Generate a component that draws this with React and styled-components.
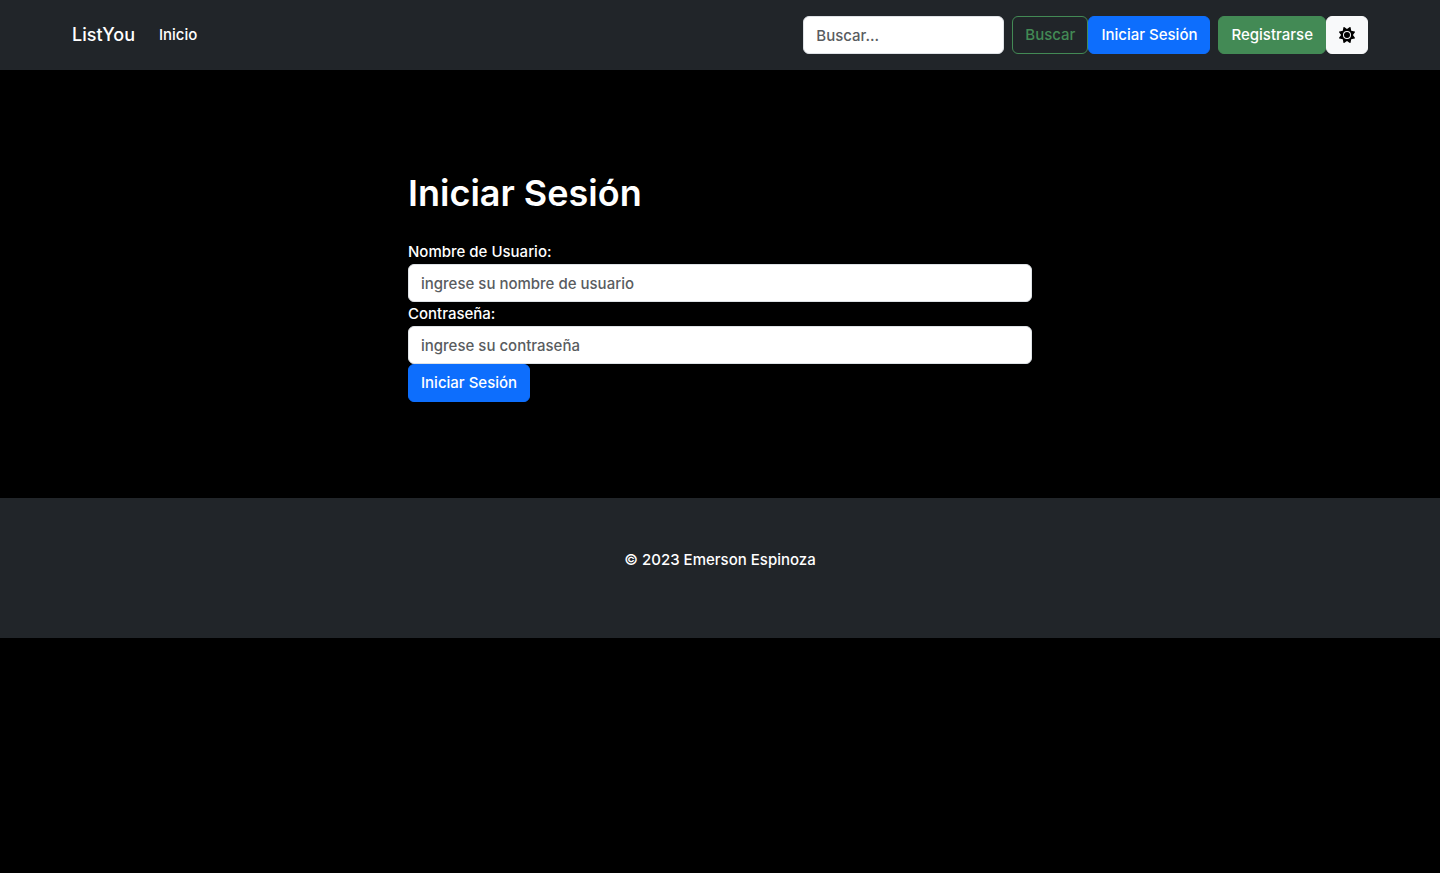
import React from "react";
import styled, { createGlobalStyle } from "styled-components";
import { FaSun } from "react-icons/fa6";

const GlobalStyle = createGlobalStyle`
  *, *::before, *::after {
    box-sizing: border-box;
  }
  body {
    margin: 0;
    background: #000;
    color: #fff;
    font-family: Inter, "Liberation Sans", sans-serif;
    font-size: 15px;
    font-weight: 500;
    line-height: 24px;
  }
`;

const Container = styled.div`
  width: 100%;
  max-width: 1320px;
  margin: 0 auto;
  padding: 0 12px;
`;

const Navbar = styled.header`
  padding: 16px 0;
  background: #212529;
`;

const NavbarInner = styled(Container)`
  display: flex;
  flex-wrap: wrap;
  align-items: center;
`;

const Brand = styled.a`
  margin-right: 16px;
  color: #fff;
  font-size: 18px;
  text-decoration: none;
`;

const Nav = styled.nav`
  display: flex;
  flex: 1;
`;

const NavLink = styled.a`
  padding: 7px 8px;
  color: #fff;
  text-decoration: none;
`;

const SearchForm = styled.form`
  display: flex;
  gap: 8px;
`;

const TextInput = styled.input`
  display: block;
  width: ${({ $width }) => $width || "100%"};
  height: 38px;
  padding: 6px 12px;
  border: 1px solid #dee2e6;
  border-radius: 6px;
  background: #fff;
  color: #212529;
  font: inherit;

  &::placeholder {
    color: #595c5f;
    opacity: 1;
  }
`;

const buttonColors = {
  primary: ["#0d6efd", "#0d6efd", "#fff"],
  success: ["#438a55", "#438a55", "#fff"],
  outline: ["transparent", "#438a55", "#438a55"],
  light: ["#f8f9fa", "#f8f9fa", "#000"],
};

const Button = styled.button`
  display: inline-flex;
  align-items: center;
  justify-content: center;
  height: 38px;
  padding: 6px 12px;
  border: 1px solid ${({ $kind }) => buttonColors[$kind][1]};
  border-radius: 6px;
  background: ${({ $kind }) => buttonColors[$kind][0]};
  color: ${({ $kind }) => buttonColors[$kind][2]};
  font: inherit;
  white-space: nowrap;
  cursor: pointer;
`;

const Account = styled.div`
  display: flex;
  gap: 8px;
`;

const Main = styled.main`
  padding: 96px 12px;
`;

const LoginForm = styled.form`
  width: 100%;
  max-width: 624px;
  margin: 0 auto;
`;

const Title = styled.h1`
  margin: 0;
  padding: 3px 0 23px;
  font-size: 36px;
  font-weight: 600;
  line-height: 48px;
`;

const Label = styled.label`
  display: block;
`;

const Footer = styled.footer`
  padding: 50px 0;
  background: #212529;
  text-align: center;
`;

const Copyright = styled.p`
  margin: 0 0 16px;
`;

export default function App() {
  return (
    <>
      <GlobalStyle />
      <Navbar>
        <NavbarInner>
          <Brand href="#">ListYou</Brand>
          <Nav>
            <NavLink href="#">Inicio</NavLink>
          </Nav>
          <SearchForm role="search" onSubmit={(e) => e.preventDefault()}>
            <TextInput $width="201px" type="search" placeholder="Buscar..." aria-label="Buscar" />
            <Button $kind="outline" type="submit">Buscar</Button>
          </SearchForm>
          <Account>
            <Button $kind="primary" type="button">Iniciar Sesión</Button>
            <Button $kind="success" type="button">Registrarse</Button>
          </Account>
          <Button $kind="light" type="button" aria-label="Cambiar tema">
            <FaSun size={16} />
          </Button>
        </NavbarInner>
      </Navbar>
      <Main>
        <LoginForm onSubmit={(e) => e.preventDefault()}>
          <Title>Iniciar Sesión</Title>
          <Label htmlFor="username">Nombre de Usuario:</Label>
          <TextInput id="username" type="text" placeholder="ingrese su nombre de usuario" />
          <Label htmlFor="password">Contraseña:</Label>
          <TextInput id="password" type="password" placeholder="ingrese su contraseña" />
          <Button $kind="primary" type="submit">Iniciar Sesión</Button>
        </LoginForm>
      </Main>
      <Footer>
        <Copyright>© 2023 Emerson Espinoza</Copyright>
      </Footer>
    </>
  );
}
